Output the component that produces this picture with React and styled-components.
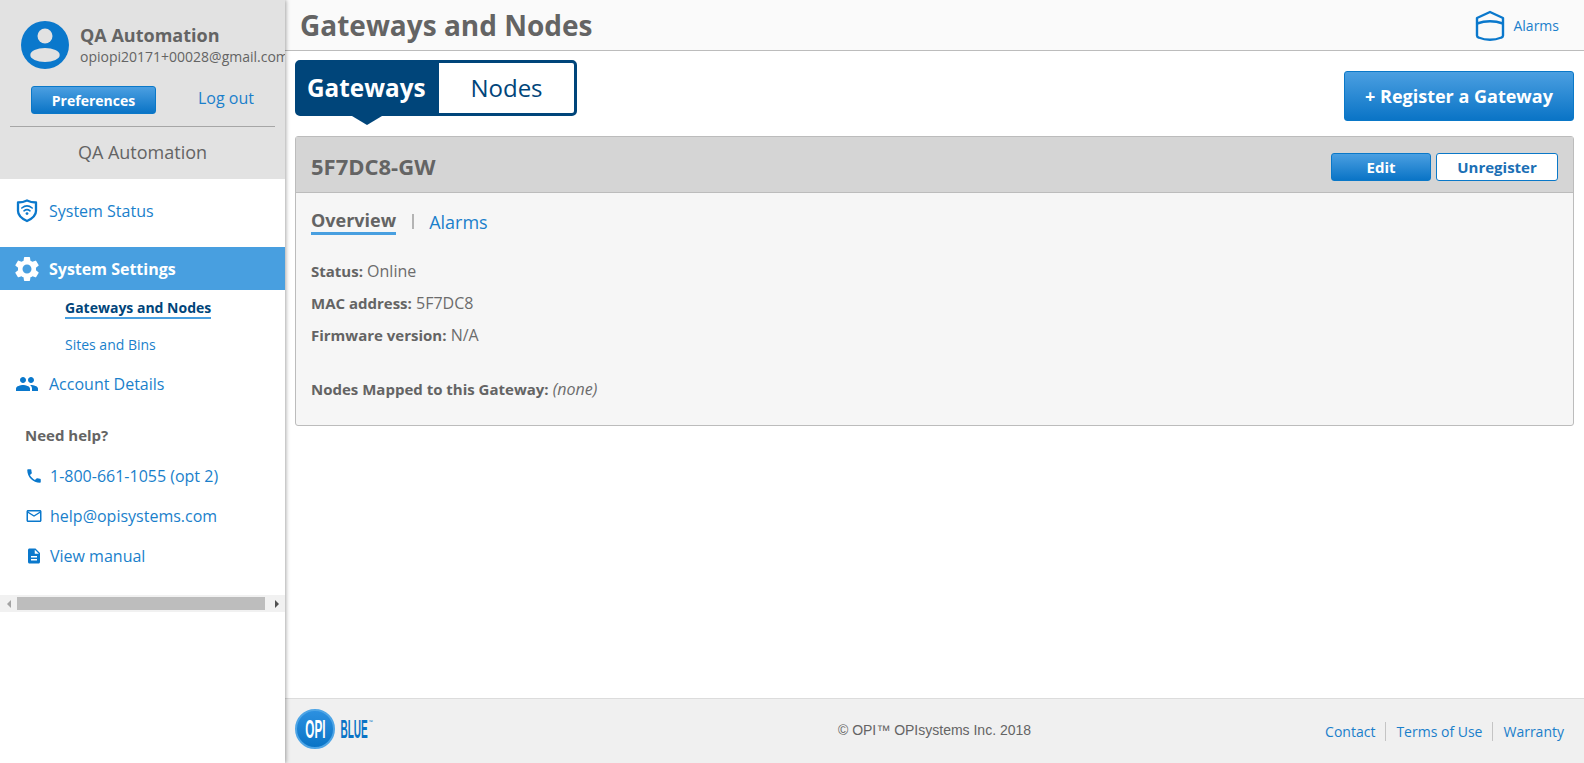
import React from 'react';
import styled, { createGlobalStyle } from 'styled-components';

const Global = createGlobalStyle`
  html, body { margin: 0; padding: 0; height: 100%; background: #fff; overflow: hidden; }
  body { font-family: "Open Sans", "Liberation Sans", sans-serif; color: #646464; }
  #root { height: 100%; }
  * { box-sizing: border-box; }
`;

const Shell = styled.div`
  display: flex;
  width: 1584px;
  height: 763px;
  overflow: hidden;
`;

const Sidebar = styled.aside`
  width: 285px;
  flex: none;
  background: #fff;
  overflow: hidden;
  box-shadow: 1px 0 4px rgba(0, 0, 0, 0.35);
  position: relative;
  z-index: 2;
`;

const Profile = styled.div`
  background: #e2e2e2;
  height: 179px;
  padding: 21px 10px 0;
`;

const UserRow = styled.div`
  display: flex;
  align-items: center;
  gap: 11px;
  padding-left: 11px;
  white-space: nowrap;
`;

const UserText = styled.div`
  display: flex;
  flex-direction: column;
`;

const UserName = styled.div`
  font-size: 18px;
  font-weight: 700;
  line-height: 24px;
  margin-top: -2px;
`;

const UserMail = styled.div`
  font-size: 14px;
  line-height: 19px;
`;

const ProfileActions = styled.div`
  display: flex;
  align-items: center;
  padding: 17px 0 0 21px;
`;

const BlueButton = styled.button`
  display: block;
  border: 1px solid #0a78c8;
  border-radius: 3px;
  background: linear-gradient(#4b9fe1, #0a74c6);
  color: #fff;
  font-family: inherit;
  font-weight: 700;
  font-size: ${p => p.$size}px;
  width: ${p => p.$w}px;
  height: ${p => p.$h}px;
  padding: 0;
`;

const LogOut = styled.a`
  color: #1a7fcb;
  font-size: 16px;
  margin-left: 42px;
  margin-top: -4px;
`;

const ProfileRule = styled.hr`
  border: 0;
  border-top: 1px solid #a6a6a6;
  margin: 12px 0 0;
  width: 265px;
`;

const OrgName = styled.div`
  font-size: 18px;
  line-height: 24px;
  text-align: center;
  margin-top: 13px;
`;

const Nav = styled.nav`
  display: flex;
  flex-direction: column;
`;

const NavItem = styled.a`
  display: flex;
  align-items: center;
  height: 43px;
  padding-left: 15px;
  gap: 10px;
  font-size: 16px;
  color: ${p => (p.$active ? '#fff' : '#1a7fcb')};
  background: ${p => (p.$active ? '#489fe0' : 'transparent')};
  font-weight: ${p => (p.$active ? 700 : 400)};
  margin-top: ${p => p.$mt || 0}px;
`;

const NavIcon = styled.svg`
  width: ${p => p.$size || 24}px;
  height: ${p => p.$size || 24}px;
  margin: ${p => (24 - (p.$size || 24)) / 2}px;
  flex: none;
  fill: ${p => (p.$active ? '#fff' : '#0a78cc')};
`;

const SubNav = styled.div`
  display: flex;
  flex-direction: column;
  align-items: flex-start;
  padding-left: 65px;
`;

const SubItem = styled.a`
  font-size: 14px;
  line-height: 19px;
  color: ${p => (p.$active ? '#00457a' : '#1a7fcb')};
  font-weight: ${p => (p.$active ? 700 : 400)};
  border-bottom: ${p => (p.$active ? '2px solid #489fe0' : '0')};
  margin-top: ${p => p.$mt}px;
`;

const Help = styled.div`
  padding: 21px 0 0 25px;
`;

const HelpTitle = styled.div`
  font-size: 15px;
  font-weight: 700;
  line-height: 19px;
  margin-bottom: 20px;
`;

const HelpRow = styled.a`
  display: flex;
  align-items: center;
  gap: 7px;
  height: 22px;
  margin-bottom: 18px;
  font-size: 16px;
  color: #1a7fcb;
`;

const HelpIcon = styled.svg`
  width: 18px;
  height: 18px;
  fill: #0a78cc;
  flex: none;
`;

const ScrollBar = styled.div`
  display: flex;
  align-items: center;
  height: 17px;
  margin-top: 28px;
  background: #f1f1f1;
`;

const ScrollArrow = styled.span`
  width: ${p => (p.$left ? 17 : 20)}px;
  flex: none;
  display: flex;
  justify-content: center;
  padding-left: ${p => (p.$left ? 0 : 4)}px;
  &::before {
    content: '';
    border-style: solid;
    border-width: 4px 0;
    border-color: transparent;
    ${p => (p.$left ? 'border-right: 4px solid #a3a3a3;' : 'border-left: 4px solid #505050;')}
  }
`;

const ScrollThumb = styled.span`
  flex: 1;
  height: 13px;
  background: #bdbdbd;
`;

const Main = styled.main`
  flex: 1;
  display: flex;
  flex-direction: column;
  min-width: 0;
`;

const Header = styled.header`
  height: 51px;
  flex: none;
  background: #fafafa;
  border-bottom: 1px solid #bcbcbc;
  display: flex;
  align-items: center;
  justify-content: space-between;
  padding: 0 25px 0 15px;
`;

const Title = styled.h1`
  margin: 0;
  font-size: 28px;
  font-weight: 700;
  color: #646464;
`;

const AlarmLink = styled.a`
  display: flex;
  align-items: center;
  gap: 8px;
  font-size: 14px;
  color: #1a7fcb;
`;

const Content = styled.div`
  flex: 1;
  padding: 9px 10px 0;
`;

const TabBar = styled.div`
  display: flex;
  justify-content: space-between;
  align-items: flex-start;
`;

const Tabs = styled.div`
  display: flex;
  width: 282px;
  height: 56px;
  border: 3px solid #00457a;
  border-radius: 5px;
  background: #00457a;
  position: relative;
`;

const Tab = styled.div`
  width: ${p => p.$w}px;
  display: flex;
  align-items: center;
  justify-content: ${p => (p.$active ? 'flex-start' : 'center')};
  padding: 0 0 2px ${p => (p.$active ? 9 : 0)}px;
  font-size: ${p => (p.$active ? 24.3 : 24)}px;
  font-weight: ${p => (p.$active ? 700 : 400)};
  color: ${p => (p.$active ? '#fff' : '#00457a')};
  background: ${p => (p.$active ? '#00457a' : '#fff')};
  border-radius: ${p => (p.$active ? '0' : '0 2px 2px 0')};
  &::after {
    content: ${p => (p.$active ? "''" : 'none')};
    position: absolute;
    left: 54px;
    top: 53px;
    border-style: solid;
    border-width: 9px 15px 0;
    border-color: #00457a transparent transparent;
  }
`;

const RegisterWrap = styled.div`
  padding-top: 11px;
`;

const Card = styled.section`
  margin-top: 15px;
  border: 1px solid #bcbcbc;
  border-radius: 3px;
  background: #f6f6f6;
  height: 290px;
`;

const CardHead = styled.div`
  height: 56px;
  background: #d5d5d5;
  border-bottom: 1px solid #bcbcbc;
  display: flex;
  align-items: flex-start;
  justify-content: space-between;
  padding: 16px 15px 0;
`;

const CardTitle = styled.h2`
  margin: 0;
  font-size: 22px;
  line-height: 26px;
  font-weight: 700;
  color: #646464;
`;

const CardActions = styled.div`
  display: flex;
  gap: 5px;
`;

const OutlineButton = styled.button`
  width: 122px;
  height: 28px;
  border: 1px solid #0a78c8;
  border-radius: 3px;
  background: #fff;
  color: #1b6fb5;
  font-family: inherit;
  font-weight: 700;
  font-size: 15px;
  padding: 0;
`;

const CardBody = styled.div`
  padding: 15px 15px 0;
`;

const SubTabs = styled.div`
  display: flex;
  align-items: flex-start;
  margin-bottom: 23px;
`;

const SubTabActive = styled.span`
  font-size: 18px;
  font-weight: 700;
  line-height: 24px;
  border-bottom: 3px solid #489fe0;
`;

const SubTabSep = styled.span`
  width: 2px;
  height: 15px;
  background: #b4b4b4;
  margin: 6px 15px 0 16px;
`;

const SubTabLink = styled.a`
  font-size: 18px;
  line-height: 29px;
  color: #1a7fcb;
`;

const Field = styled.div`
  font-size: 16px;
  line-height: 22px;
  height: 22px;
  margin-bottom: ${p => p.$mb || 10}px;
  color: #6c6c6c;
`;

const FieldLabel = styled.b`
  font-size: 15px;
  color: #646464;
`;

const Footer = styled.footer`
  height: 65px;
  flex: none;
  background: #f0f0f0;
  border-top: 1px solid #dcdcdc;
  display: grid;
  grid-template-columns: 1fr auto 1fr;
  align-items: center;
  padding: 0 10px;
`;

const Logo = styled.div`
  display: flex;
  align-items: center;
  margin-top: -4px;
`;

const LogoBadge = styled.div`
  width: 40px;
  height: 40px;
  border-radius: 50%;
  background: linear-gradient(#2c90e0, #0a74c6);
  border: 2px solid #4ea5e6;
  display: flex;
  align-items: center;
  justify-content: center;
  color: #fff;
  font-family: "Liberation Sans", sans-serif;
  font-weight: 700;
  font-size: 26px;
  flex: none;
  overflow: hidden;
`;

const Squeezed = styled.span`
  display: inline-block;
  transform: scaleX(${p => p.$x});
`;

const LogoWord = styled.div`
  color: #0a74c6;
  font-family: "Liberation Sans", sans-serif;
  font-weight: 700;
  font-size: 25px;
  width: 30px;
  margin-left: 4px;
  display: flex;
  justify-content: center;
  white-space: nowrap;
`;

const LogoMark = styled.sup`
  color: #0a74c6;
  font-size: 5px;
  margin-top: -14px;
`;

const Copyright = styled.div`
  font-family: "Liberation Sans", sans-serif;
  font-size: 14px;
  margin-top: -2px;
`;

const FooterLinks = styled.div`
  display: flex;
  align-items: center;
  justify-content: flex-end;
  padding-right: 10px;
`;

const FooterLink = styled.a`
  font-size: 14px;
  line-height: 19px;
  color: #1a7fcb;
  padding: 0 10px;
  border-left: ${p => (p.$first ? '0' : '1px solid #c4c4c4')};
  &:last-child { padding-right: 0; }
`;

const icons = {
  gear: 'M19.14 12.94c.04-.3.06-.61.06-.94 0-.32-.02-.64-.07-.94l2.03-1.58a.49.49 0 0 0 .12-.61l-1.92-3.32a.488.488 0 0 0-.59-.22l-2.39.96c-.5-.38-1.03-.7-1.62-.94l-.36-2.54a.484.484 0 0 0-.48-.41h-3.84c-.24 0-.43.17-.47.41l-.36 2.54c-.59.24-1.13.57-1.62.94l-2.39-.96c-.22-.08-.47 0-.59.22L2.74 8.87c-.12.21-.08.47.12.61l2.03 1.58c-.05.3-.09.63-.09.94s.02.64.07.94l-2.03 1.58a.49.49 0 0 0-.12.61l1.92 3.32c.12.22.37.29.59.22l2.39-.96c.5.38 1.03.7 1.62.94l.36 2.54c.05.24.24.41.48.41h3.84c.24 0 .44-.17.47-.41l.36-2.54c.59-.24 1.13-.56 1.62-.94l2.39.96c.22.08.47 0 .59-.22l1.92-3.32c.12-.22.07-.47-.12-.61l-2.01-1.58zM12 15.6c-1.98 0-3.6-1.62-3.6-3.6s1.62-3.6 3.6-3.6 3.6 1.62 3.6 3.6-1.62 3.6-3.6 3.6z',
  people: 'M16 11c1.66 0 2.99-1.34 2.99-3S17.66 5 16 5c-1.66 0-3 1.34-3 3s1.34 3 3 3zm-8 0c1.66 0 2.99-1.34 2.99-3S9.66 5 8 5C6.34 5 5 6.34 5 8s1.34 3 3 3zm0 2c-2.33 0-7 1.17-7 3.5V19h14v-2.5c0-2.33-4.67-3.5-7-3.5zm8 0c-.29 0-.62.02-.97.05 1.16.84 1.97 1.97 1.97 3.45V19h6v-2.5c0-2.33-4.67-3.5-7-3.5z',
  phone: 'M6.62 10.79c1.44 2.83 3.76 5.14 6.59 6.59l2.2-2.2c.27-.27.67-.36 1.02-.24 1.12.37 2.33.57 3.57.57.55 0 1 .45 1 1V20c0 .55-.45 1-1 1-9.39 0-17-7.61-17-17 0-.55.45-1 1-1h3.5c.55 0 1 .45 1 1 0 1.25.2 2.45.57 3.57.11.35.03.74-.25 1.02l-2.2 2.2z',
  mail: 'M20 4H4c-1.1 0-1.99.9-1.99 2L2 18c0 1.1.9 2 2 2h16c1.1 0 2-.9 2-2V6c0-1.1-.9-2-2-2zm0 14H4V8l8 5 8-5v10zm-8-7L4 6h16l-8 5z',
  doc: 'M14 2H6c-1.1 0-1.99.9-1.99 2L4 20c0 1.1.89 2 1.99 2H18c1.1 0 2-.9 2-2V8l-6-6zm2 16H8v-2h8v2zm0-4H8v-2h8v2zm-3-5V3.5L18.5 9H13z',
};

const Avatar = () => (
  <svg width="48" height="48" viewBox="0 0 48 48" style={{ flex: 'none' }}>
    <circle cx="24" cy="24" r="24" fill="#0a78cc" />
    <circle cx="24" cy="15" r="7.500" fill="#e2e2e2" />
    <ellipse cx="24" cy="34" rx="14.700" ry="7" fill="#e2e2e2" />
  </svg>
);

const ShieldWifi = () => (
  <svg width="24" height="24" viewBox="0 0 24 24" fill="none" style={{ flex: 'none' }}>
    <path d="M3 3.500C7 3.500 9.500 2.800 12 1.500c2.500 1.300 5 2 9 2v8.500c0 4.500-3.500 7.500-9 10-5.500-2.500-9-5.500-9-10z" stroke="#0a78cc" strokeWidth="2.300" strokeLinejoin="round" />
    <path d="M6.800 9c3.200-2.600 7.200-2.600 10.400 0M9 11.800c1.800-1.400 4.200-1.400 6 0" stroke="#0a78cc" strokeWidth="1.600" strokeLinecap="round" />
    <circle cx="12" cy="14.600" r="1.400" fill="#0a78cc" />
  </svg>
);

const AlarmBin = () => (
  <svg width="30" height="31" viewBox="0 0 30 31" fill="none" style={{ flex: 'none' }}>
    <path d="M2 8 15 2l13 6v17.500Q28 27 26.500 27.500Q15 32 3.500 27.500Q2 27 2 25.500z" stroke="#0a78cc" strokeWidth="2.400" strokeLinejoin="round" />
    <path d="M2 13.500Q15 9 28 13.500" stroke="#0a78cc" strokeWidth="2.400" />
  </svg>
);

export default function App() {
  return (
    <Shell>
      <Global />
      <Sidebar>
        <Profile>
          <UserRow>
            <Avatar />
            <UserText>
              <UserName>QA Automation</UserName>
              <UserMail>opiopi20171+00028@gmail.com</UserMail>
            </UserText>
          </UserRow>
          <ProfileActions>
            <BlueButton $w={125} $h={28} $size={14}>Preferences</BlueButton>
            <LogOut>Log out</LogOut>
          </ProfileActions>
          <ProfileRule />
          <OrgName>QA Automation</OrgName>
        </Profile>
        <Nav>
          <NavItem $mt={10}>
            <ShieldWifi />
            System Status
          </NavItem>
          <NavItem $active $mt={15}>
            <NavIcon $active $size={30} viewBox="0 0 24 24"><path d={icons.gear} /></NavIcon>
            System Settings
          </NavItem>
          <SubNav>
            <SubItem $active $mt={8}>Gateways and Nodes</SubItem>
            <SubItem $mt={16}>Sites and Bins</SubItem>
          </SubNav>
          <NavItem $mt={8}>
            <NavIcon viewBox="0 0 24 24"><path d={icons.people} /></NavIcon>
            Account Details
          </NavItem>
        </Nav>
        <Help>
          <HelpTitle>Need help?</HelpTitle>
          <HelpRow>
            <HelpIcon viewBox="0 0 24 24"><path d={icons.phone} /></HelpIcon>
            1-800-661-1055 (opt 2)
          </HelpRow>
          <HelpRow>
            <HelpIcon viewBox="0 0 24 24"><path d={icons.mail} /></HelpIcon>
            help@opisystems.com
          </HelpRow>
          <HelpRow>
            <HelpIcon viewBox="0 0 24 24"><path d={icons.doc} /></HelpIcon>
            View manual
          </HelpRow>
        </Help>
        <ScrollBar>
          <ScrollArrow $left />
          <ScrollThumb />
          <ScrollArrow />
        </ScrollBar>
      </Sidebar>
      <Main>
        <Header>
          <Title>Gateways and Nodes</Title>
          <AlarmLink>
            <AlarmBin />
            Alarms
          </AlarmLink>
        </Header>
        <Content>
          <TabBar>
            <Tabs>
              <Tab $active $w={141}>Gateways</Tab>
              <Tab $w={135}>Nodes</Tab>
            </Tabs>
            <RegisterWrap>
              <BlueButton $w={230} $h={50} $size={18}>+ Register a Gateway</BlueButton>
            </RegisterWrap>
          </TabBar>
          <Card>
            <CardHead>
              <CardTitle>5F7DC8-GW</CardTitle>
              <CardActions>
                <BlueButton $w={100} $h={28} $size={15}>Edit</BlueButton>
                <OutlineButton>Unregister</OutlineButton>
              </CardActions>
            </CardHead>
            <CardBody>
              <SubTabs>
                <SubTabActive>Overview</SubTabActive>
                <SubTabSep />
                <SubTabLink>Alarms</SubTabLink>
              </SubTabs>
              <Field><FieldLabel>Status:</FieldLabel> Online</Field>
              <Field><FieldLabel>MAC address:</FieldLabel> 5F7DC8</Field>
              <Field $mb={32}><FieldLabel>Firmware version:</FieldLabel> N/A</Field>
              <Field><FieldLabel>Nodes Mapped to this Gateway:</FieldLabel> <i>(none)</i></Field>
            </CardBody>
          </Card>
        </Content>
        <Footer>
          <Logo>
            <LogoBadge><Squeezed $x={0.45}>OPI</Squeezed></LogoBadge>
            <LogoWord><Squeezed $x={0.4}>BLUE</Squeezed></LogoWord>
            <LogoMark>™</LogoMark>
          </Logo>
          <Copyright>© OPI™ OPIsystems Inc. 2018</Copyright>
          <FooterLinks>
            <FooterLink $first>Contact</FooterLink>
            <FooterLink>Terms of Use</FooterLink>
            <FooterLink>Warranty</FooterLink>
          </FooterLinks>
        </Footer>
      </Main>
    </Shell>
  );
}
